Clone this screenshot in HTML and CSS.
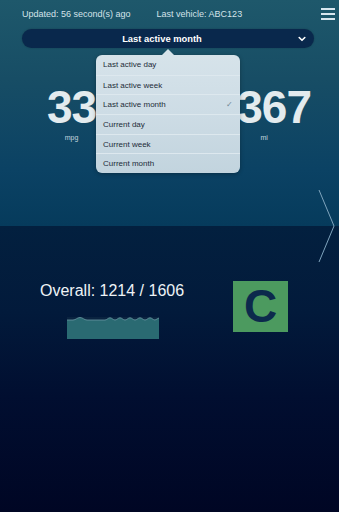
FILE: index.html
```html
<!DOCTYPE html>
<html>
<head>
<meta charset="utf-8">
<link rel="stylesheet" href="styles.css">
</head>
<body>
<div class="screen">
  <section class="top">
    <header class="header">
      <span class="updated">Updated: 56 second(s) ago</span>
      <span class="vehicle">Last vehicle: ABC123</span>
      <span class="menu" aria-label="menu"><i></i><i></i><i></i></span>
    </header>
    <div class="picker">
      <span class="picker-label">Last active month</span>
      <span class="picker-chev">
        <svg width="8" height="6" viewBox="0 0 8 6"><path d="M1.2 1.5 L4 4.3 L6.8 1.5" fill="none" stroke="#ffffff" stroke-width="1.6" stroke-linecap="round" stroke-linejoin="round"/></svg>
      </span>
    </div>
    <div class="stats">
      <div class="stat">
        <div class="stat-num">33</div>
        <div class="stat-unit">mpg</div>
      </div>
      <div class="stat">
        <div class="stat-num">367</div>
        <div class="stat-unit">mi</div>
      </div>
    </div>
    <svg class="next" width="20" height="74" viewBox="0 0 20 74"><polyline points="2,1 17,37 2,73" fill="none" stroke="#7fa4bd" stroke-width="1"/></svg>
    <div class="popover">
      <span class="popover-arrow"></span>
      <ul class="options">
        <li>Last active day</li>
        <li>Last active week</li>
        <li class="selected">Last active month<span class="check">✓</span></li>
        <li>Current day</li>
        <li>Current week</li>
        <li>Current month</li>
      </ul>
    </div>
  </section>
  <section class="bottom">
    <div class="overall">
      <div class="overall-text">Overall: 1214 / 1606</div>
      <svg class="wave" width="92" height="22" viewBox="0 0 92 22">
        <rect x="0" y="0" width="92" height="22" fill="#0a2340"/>
        <path d="M0 3 L6 3 C9 3 10 0.5 13 0.5 C16 0.5 17 3 20 3 L38 3 C40 3 41 0.8 43 0.8 C45 0.8 46 3 48 3 C50 3 51 0.8 53 0.8 C55 0.8 56 3 58 3 C60 3 61 0.8 63 0.8 C65 0.8 66 3 68 3 C70 3 71 0.8 73 0.8 C75 0.8 76 3 78 3 C80 3 81 0.8 83 0.8 C85 0.8 86 3 88 3 L92 1 L92 22 L0 22 Z" fill="#2a6a72"/>
        <path d="M0 3 L6 3 C9 3 10 0.5 13 0.5 C16 0.5 17 3 20 3 L38 3 C40 3 41 0.8 43 0.8 C45 0.8 46 3 48 3 C50 3 51 0.8 53 0.8 C55 0.8 56 3 58 3 C60 3 61 0.8 63 0.8 C65 0.8 66 3 68 3 C70 3 71 0.8 73 0.8 C75 0.8 76 3 78 3 C80 3 81 0.8 83 0.8 C85 0.8 86 3 88 3 L92 1" fill="none" stroke="#6c98a4" stroke-width="0.8"/>
      </svg>
    </div>
    <div class="grade">C</div>
  </section>
</div>
</body>
</html>
```
FILE: styles.css
```css
* { box-sizing: border-box; }
html, body { margin: 0; padding: 0; }
body {
  width: 339px;
  height: 512px;
  overflow: hidden;
  font-family: "Liberation Sans", Arial, sans-serif;
  background: #000726;
}
.screen {
  width: 339px;
  height: 512px;
  display: flex;
  flex-direction: column;
}
.top {
  position: relative;
  height: 226px;
  flex: none;
  background: linear-gradient(180deg, #1e586b 0%, #174d65 35%, #0b4264 75%, #063b5c 100%);
}
.header {
  height: 27px;
  display: flex;
  align-items: center;
  padding-left: 22px;
  padding-top: 1px;
  color: #d4e3e9;
  font-size: 9px;
}
.vehicle { margin-left: 26px; }
.menu {
  margin-left: auto;
  margin-right: 4px;
  width: 14px;
  display: flex;
  flex-direction: column;
  gap: 3px;
  margin-top: -1px;
}
.menu i {
  display: block;
  height: 2px;
  background: #d7e6ee;
}
.picker {
  margin: 2px 25px 0 22px;
  padding-right: 12px;
  height: 19px;
  border-radius: 10px;
  background: #09284c;
  box-shadow: 0 0 2px rgba(0,0,0,0.25);
  display: flex;
  align-items: center;
  justify-content: center;
  position: relative;
  color: #ffffff;
  font-weight: bold;
  font-size: 9.4px;
}
.picker-chev {
  position: absolute;
  right: 7px;
  top: 5px;
  width: 10px;
  height: 10px;
  display: flex;
  align-items: center;
  justify-content: center;
}
.stats {
  display: flex;
  justify-content: space-between;
  padding: 36px 28px 0 47px;
}
.stat {
  display: flex;
  flex-direction: column;
  align-items: center;
}
.stat-num {
  font-size: 46px;
  line-height: 46px;
  font-weight: bold;
  color: #e3ebee;
  letter-spacing: -1px;
}
.stat-unit {
  font-size: 7px;
  color: #c3d6df;
  margin-top: 4px;
}
.stat:last-child .stat-unit { margin-left: -20px; }
.next {
  position: absolute;
  right: 2px;
  top: 189px;
}
.popover {
  position: absolute;
  left: 96px;
  top: 55px;
  width: 144px;
  border-radius: 6px;
  background: linear-gradient(180deg, #d6e3ea 0%, #cddce5 50%, #c2d4de 100%);
  box-shadow: 0 1px 4px rgba(0,0,0,0.3);
}
.popover-arrow {
  position: absolute;
  left: 66px;
  top: -6px;
  width: 0;
  height: 0;
  border-left: 6px solid transparent;
  border-right: 6px solid transparent;
  border-bottom: 6px solid #d6e3ea;
}
.options {
  list-style: none;
  margin: 0;
  padding: 0;
}
.options li {
  height: 19.7px;
  display: flex;
  align-items: center;
  padding-left: 7px;
  padding-right: 7px;
  font-size: 8px;
  color: #1d2c38;
  border-top: 1px solid #dde8ee;
}
.options li:first-child { border-top: none; }
.check {
  margin-left: auto;
  color: #6f8796;
  font-size: 8px;
}
.bottom {
  flex: 1;
  background: linear-gradient(180deg, #03203f 0%, #021a3b 30%, #010e30 60%, #000624 100%);
  display: flex;
  align-items: flex-start;
  padding: 55px 51px 0 40px;
}
.overall {
  display: flex;
  flex-direction: column;
}
.overall-text {
  font-size: 16px;
  line-height: 20px;
  color: #eef3f6;
  white-space: nowrap;
}
.wave {
  margin-top: 16px;
  margin-left: 27px;
  display: block;
}
.grade {
  margin-left: auto;
  width: 55px;
  height: 51px;
  background: #4c9a5f;
  color: #0c2a4c;
  font-weight: bold;
  font-size: 46px;
  line-height: 51px;
  text-align: center;
}
```
